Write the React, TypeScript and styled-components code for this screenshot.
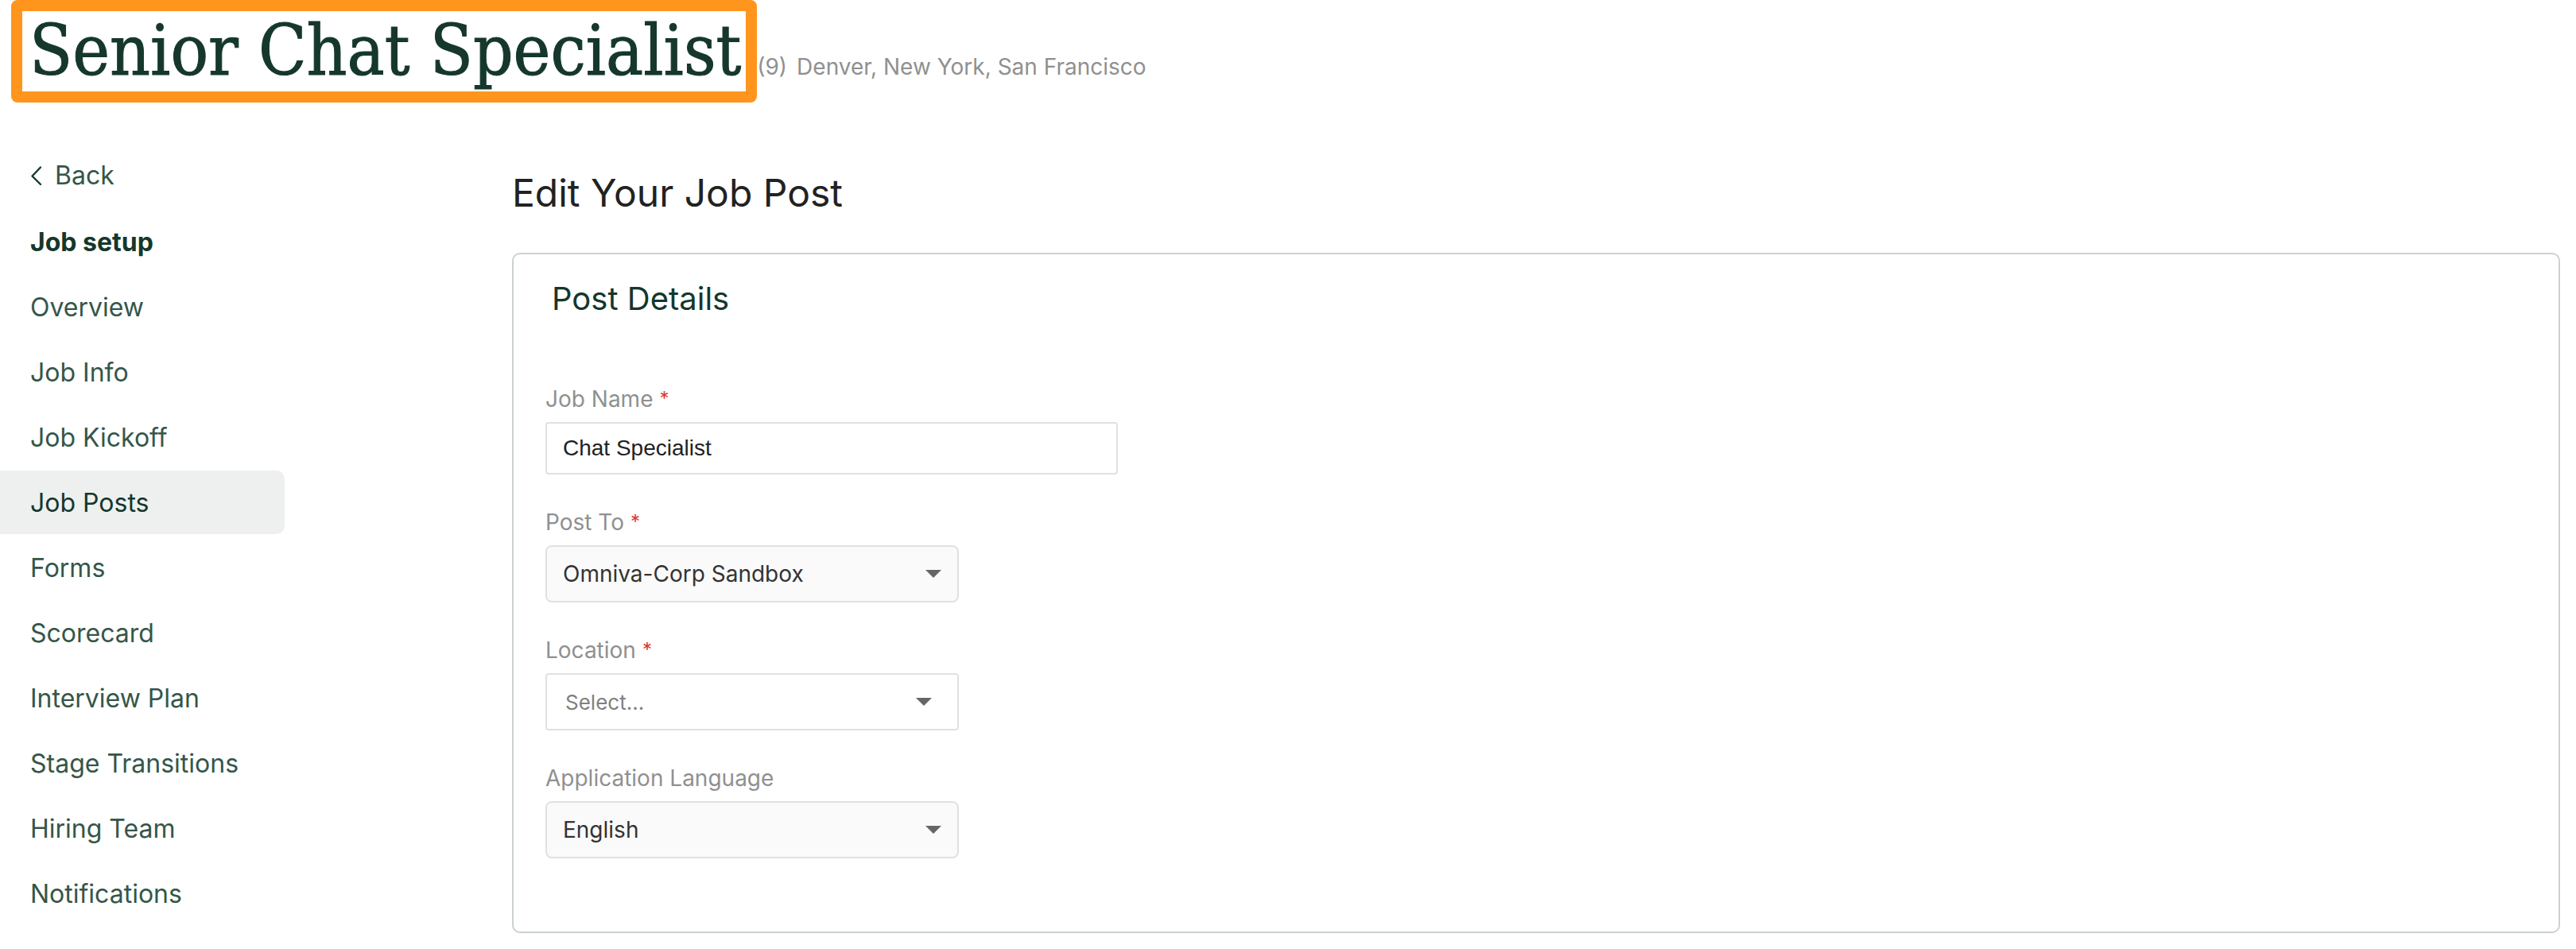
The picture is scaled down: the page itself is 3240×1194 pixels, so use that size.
import React from "react";
import styled, { createGlobalStyle } from "styled-components";

const colors = {
  ink: "#15372c",
  inkSoft: "#355648",
  heading: "#222222",
  muted: "#909090",
  border: "#e1e1e1",
  cardBorder: "#cbd2d0",
  highlight: "#ff951c",
  required: "#d93a2f",
};

const GlobalStyle = createGlobalStyle`
  *, *::before, *::after { box-sizing: border-box; }
  body {
    margin: 0;
    background: #ffffff;
    color: ${colors.ink};
    font-family: Inter, "Liberation Sans", sans-serif;
  }
  h1, h2, h3, p, ul { margin: 0; padding: 0; font-weight: 400; }
  ul { list-style: none; }
`;

const Header = styled.header`
  display: flex;
  align-items: baseline;
  padding-left: 14px;
`;

const JobTitle = styled.h1`
  padding: 0 6px 2px 9px;
  border: 14px solid ${colors.highlight};
  border-radius: 8px;
  font-family: "DejaVu Serif Condensed", "DejaVu Serif", serif;
  font-size: 88px;
  line-height: 99px;
  white-space: nowrap;
  -webkit-text-stroke: 1px ${colors.ink};
`;

const JobMeta = styled.p`
  display: flex;
  gap: 12px;
  color: ${colors.muted};
  font-size: 28px;
  line-height: 40px;
`;

const Body = styled.div`
  display: flex;
  align-items: flex-start;
  gap: 286px;
  padding: 51px 20px 20px 0;
`;

const Sidebar = styled.nav`
  flex: 0 0 358px;
`;

const NavList = styled.ul`
  display: flex;
  flex-direction: column;
  gap: 2px;
`;

const NavLink = styled.a<{ $active?: boolean }>`
  display: flex;
  align-items: center;
  gap: 16px;
  height: 80px;
  padding: 2px 0 0 38px;
  border-radius: 0 10px 10px 0;
  background: ${(p) => (p.$active ? "#eef0ef" : "transparent")};
  color: ${(p) => (p.$active ? colors.ink : colors.inkSoft)};
  font-size: 32px;
  line-height: 40px;
  text-decoration: none;
`;

const NavTitle = styled.h2`
  padding: 4px 0 0 38px;
  font-size: 32px;
  font-weight: 700;
  line-height: 82px;
`;

const Main = styled.main`
  display: flex;
  flex: 1;
  flex-direction: column;
  gap: 45px;
  min-width: 0;
  padding-top: 33px;
`;

const PageHeading = styled.h2`
  color: ${colors.heading};
  font-size: 48px;
  line-height: 60px;
`;

const Card = styled.section`
  display: flex;
  flex-direction: column;
  gap: 82px;
  padding: 32px 40px 92px;
  border: 2px solid ${colors.cardBorder};
  border-radius: 10px;
`;

const CardTitle = styled.h3`
  padding-left: 8px;
  font-size: 40px;
  line-height: 48px;
`;

const Form = styled.form`
  display: flex;
  flex-direction: column;
  gap: 40px;
`;

const Field = styled.div`
  display: flex;
  flex-direction: column;
  gap: 9px;
`;

const Label = styled.label`
  display: flex;
  gap: 8px;
  color: ${colors.muted};
  font-size: 28px;
  line-height: 40px;
`;

const Required = styled.span`
  color: ${colors.required};
  font-size: 24px;
`;

const TextInput = styled.input`
  width: 720px;
  max-width: 100%;
  height: 66px;
  padding: 0 20px;
  border: 2px solid ${colors.border};
  border-radius: 4px;
  color: ${colors.heading};
  font-family: "Liberation Sans", Arial, sans-serif;
  font-size: 28px;
`;

const SelectBox = styled.div`
  display: grid;
  width: 520px;
  max-width: 100%;
  align-items: center;

  > * { grid-area: 1 / 1; }
`;

const Select = styled.select<{ $empty?: boolean }>`
  width: 100%;
  height: 72px;
  padding: 0 60px 0 ${(p) => (p.$empty ? 23 : 20)}px;
  appearance: none;
  border: 2px solid ${colors.border};
  border-radius: ${(p) => (p.$empty ? 4 : 8)}px;
  background: ${(p) => (p.$empty ? "#ffffff" : "#fafafa")};
  color: ${(p) => (p.$empty ? "#808080" : "#333333")};
  font-family: inherit;
  font-size: ${(p) => (p.$empty ? 26 : 28)}px;
`;

const Caret = styled.svg<{ $inset: number }>`
  justify-self: end;
  width: 20px;
  height: 10px;
  margin-right: ${(p) => p.$inset}px;
  fill: #666666;
  pointer-events: none;
`;

const navItems = [
  "Overview",
  "Job Info",
  "Job Kickoff",
  "Job Posts",
  "Forms",
  "Scorecard",
  "Interview Plan",
  "Stage Transitions",
  "Hiring Team",
  "Notifications",
];

function BackIcon() {
  return (
    <svg width="15" height="26" viewBox="0 0 15 26" fill="none" stroke={colors.ink} strokeWidth="2.4" strokeLinecap="round" strokeLinejoin="round" aria-hidden="true">
      <path d="M13 2.5 2.5 13.5 13 24" />
    </svg>
  );
}

interface FieldLabelProps {
  id: string;
  text: string;
  required?: boolean;
}

function FieldLabel({ id, text, required }: FieldLabelProps) {
  return (
    <Label htmlFor={id}>
      {text}
      {required && <Required>*</Required>}
    </Label>
  );
}

interface SelectFieldProps extends FieldLabelProps {
  option: string;
  empty?: boolean;
}

function SelectField({ id, text, required, option, empty }: SelectFieldProps) {
  return (
    <Field>
      <FieldLabel id={id} text={text} required={required} />
      <SelectBox>
        <Select id={id} $empty={empty}>
          <option>{option}</option>
        </Select>
        <Caret $inset={empty ? 34 : 22} viewBox="0 0 20 10" aria-hidden="true">
          <path d="M0 0h20L10 10z" />
        </Caret>
      </SelectBox>
    </Field>
  );
}

export default function App() {
  return (
    <>
      <GlobalStyle />
      <Header>
        <JobTitle>Senior Chat Specialist</JobTitle>
        <JobMeta>
          <span>(9)</span>
          <span>Denver, New York, San Francisco</span>
        </JobMeta>
      </Header>
      <Body>
        <Sidebar aria-label="Job setup">
          <NavLink href="#back">
            <BackIcon />
            Back
          </NavLink>
          <NavTitle>Job setup</NavTitle>
          <NavList>
            {navItems.map((item) => (
              <li key={item}>
                <NavLink href={"#" + item.toLowerCase().replace(/ /g, "-")} $active={item === "Job Posts"}>
                  {item}
                </NavLink>
              </li>
            ))}
          </NavList>
        </Sidebar>
        <Main>
          <PageHeading>Edit Your Job Post</PageHeading>
          <Card>
            <CardTitle>Post Details</CardTitle>
            <Form>
              <Field>
                <FieldLabel id="job-name" text="Job Name" required />
                <TextInput id="job-name" type="text" defaultValue="Chat Specialist" />
              </Field>
              <SelectField id="post-to" text="Post To" required option="Omniva-Corp Sandbox" />
              <SelectField id="location" text="Location" required option="Select..." empty />
              <SelectField id="language" text="Application Language" option="English" />
            </Form>
          </Card>
        </Main>
      </Body>
    </>
  );
}
